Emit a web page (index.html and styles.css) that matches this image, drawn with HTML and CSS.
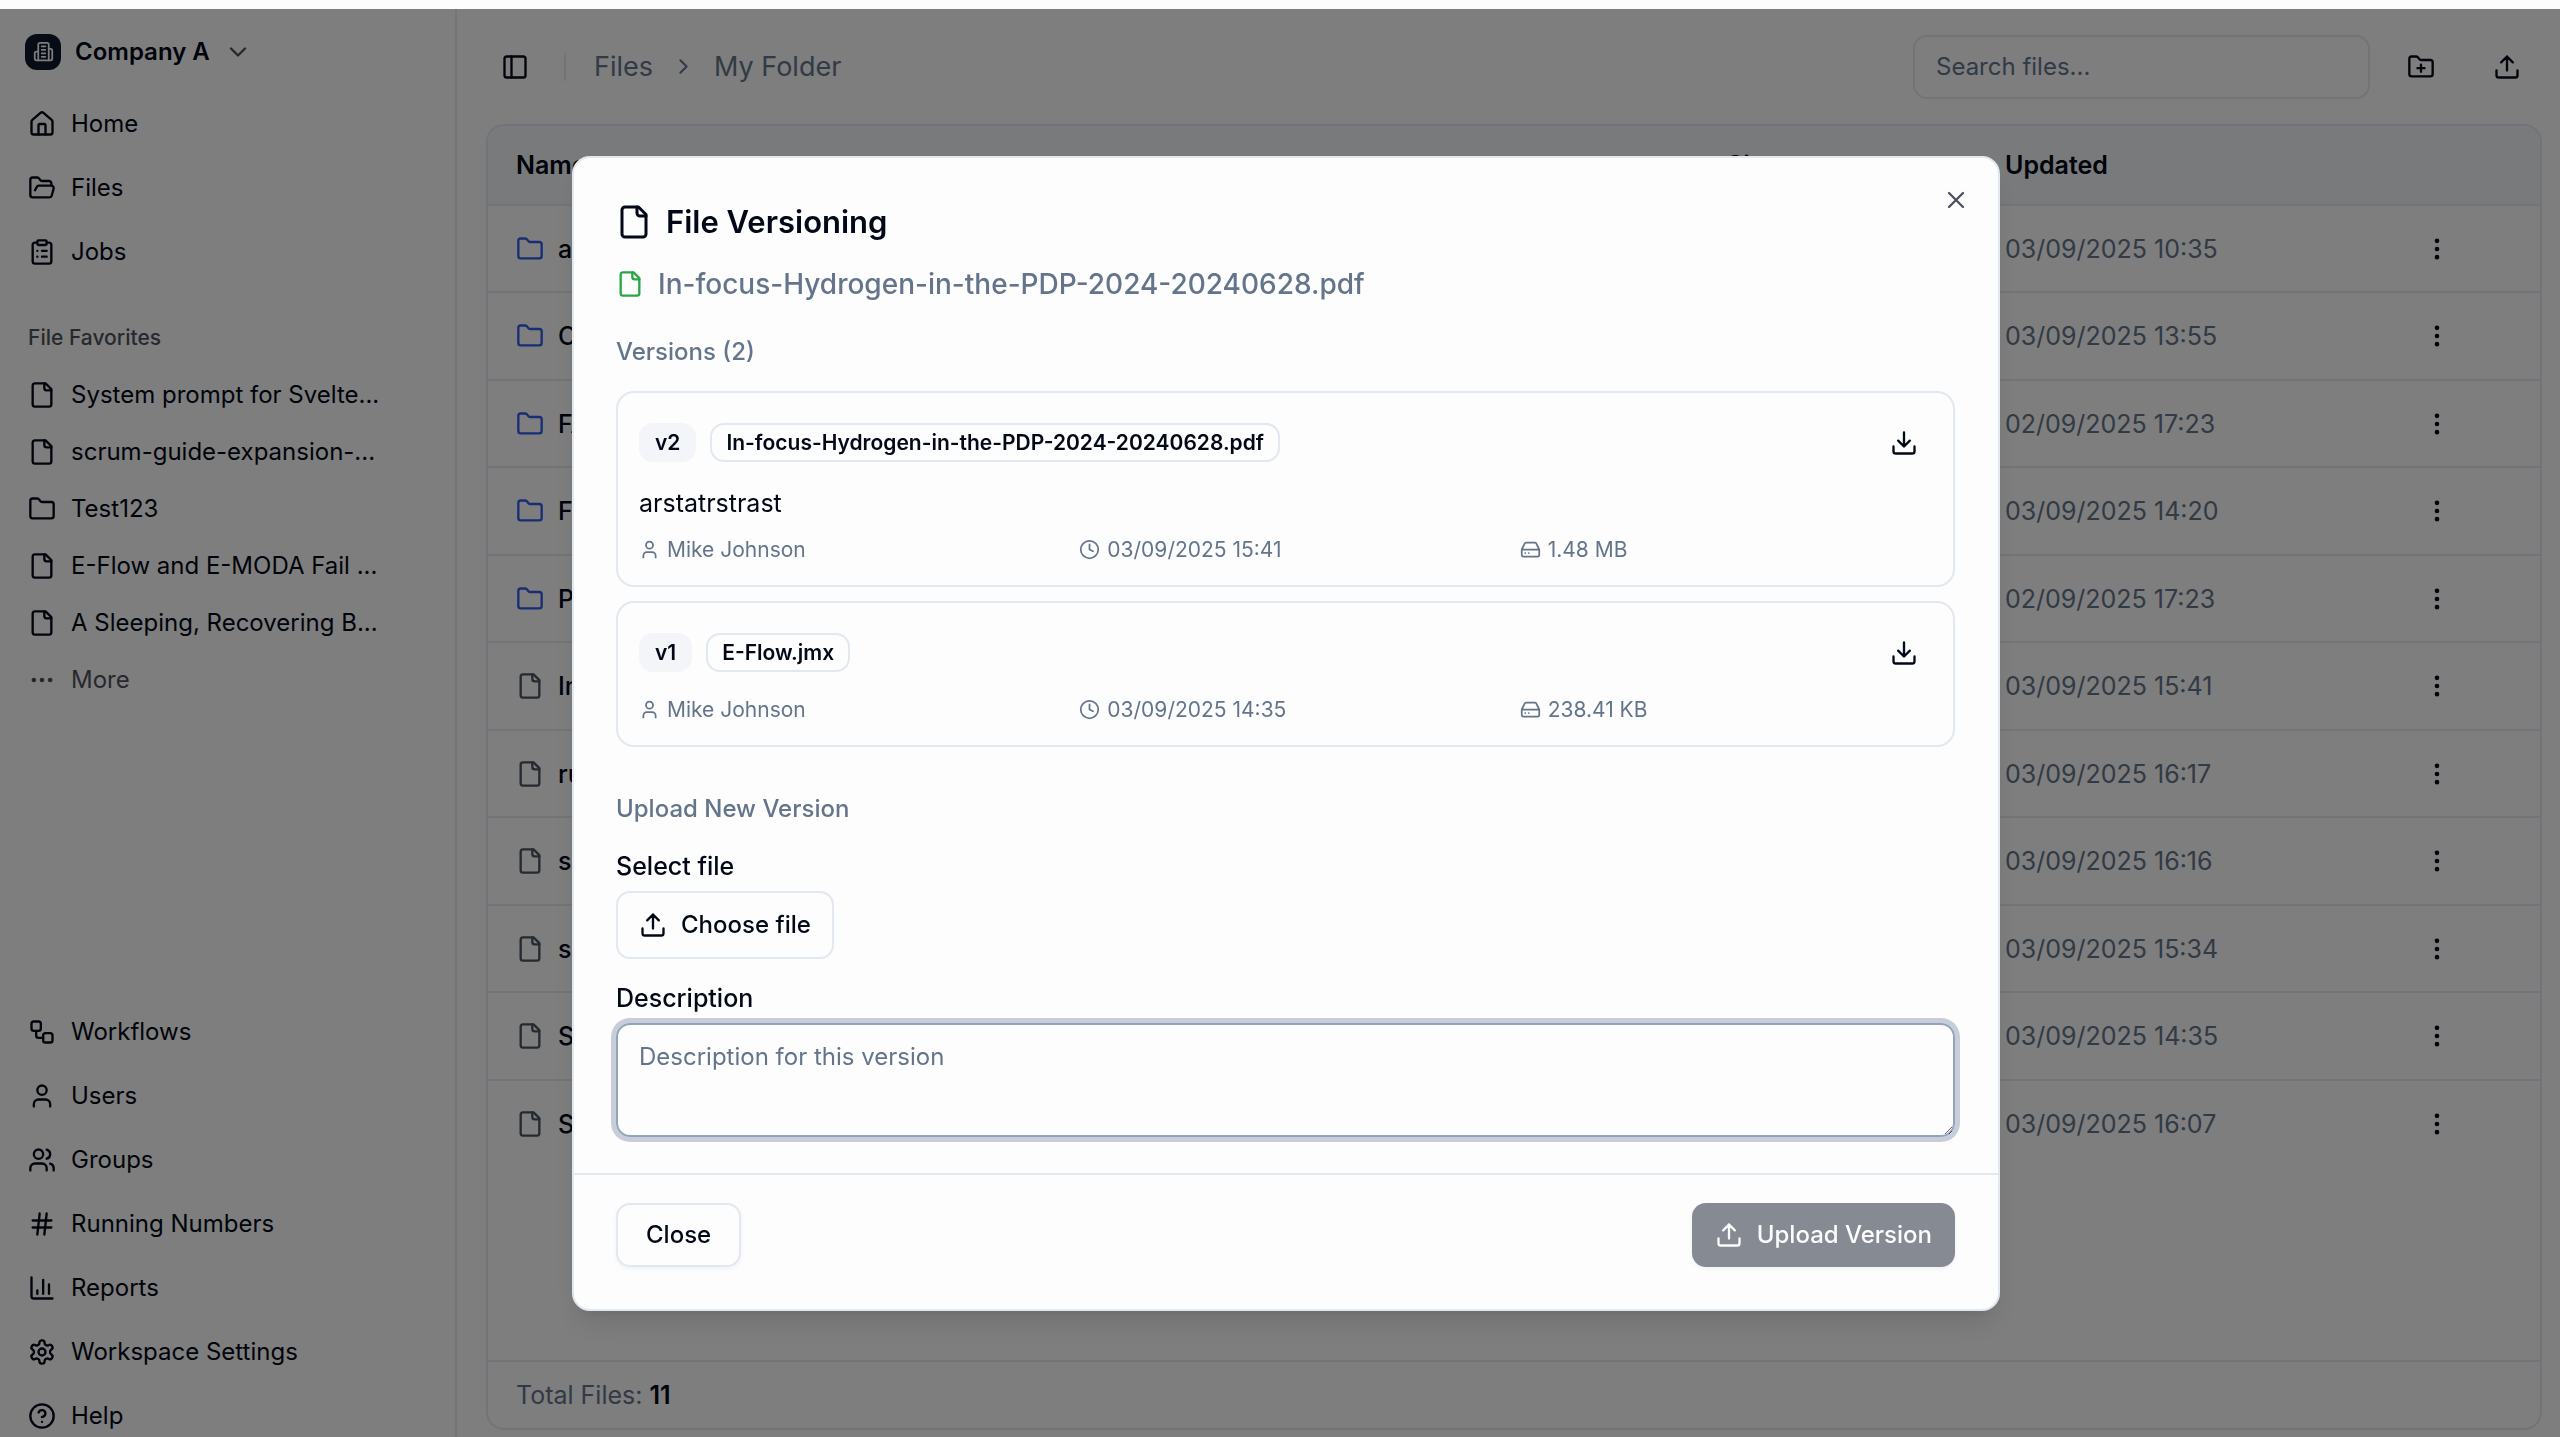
FILE: index.html
```html
<!DOCTYPE html>
<html lang="en">
<head>
  <meta charset="utf-8">
  <title>File Versioning</title>
  <link rel="stylesheet" href="styles.css">
</head>
<body>
  <!-- icon set -->
  <svg class="sprite" aria-hidden="true">
    <symbol id="building" viewBox="0 0 24 24"><path d="M6 22V4a2 2 0 0 1 2-2h8a2 2 0 0 1 2 2v18Z"/><path d="M6 12H4a2 2 0 0 0-2 2v6a2 2 0 0 0 2 2h2"/><path d="M18 9h2a2 2 0 0 1 2 2v9a2 2 0 0 1-2 2h-2"/><path d="M10 6h4M10 10h4M10 14h4M10 18h4"/></symbol>
    <symbol id="chevron-down" viewBox="0 0 24 24"><path d="m6 9 6 6 6-6"/></symbol>
    <symbol id="chevron-right" viewBox="0 0 24 24"><path d="m9 18 6-6-6-6"/></symbol>
    <symbol id="home" viewBox="0 0 24 24"><path d="M15 21v-8a1 1 0 0 0-1-1h-4a1 1 0 0 0-1 1v8"/><path d="M3 10a2 2 0 0 1 .709-1.528l7-5.999a2 2 0 0 1 2.582 0l7 5.999A2 2 0 0 1 21 10v9a2 2 0 0 1-2 2H5a2 2 0 0 1-2-2z"/></symbol>
    <symbol id="folder-open" viewBox="0 0 24 24"><path d="m6 14 1.5-2.9A2 2 0 0 1 9.24 10H20a2 2 0 0 1 1.94 2.5l-1.54 6a2 2 0 0 1-1.95 1.5H4a2 2 0 0 1-2-2V5a2 2 0 0 1 2-2h3.9a2 2 0 0 1 1.69.9l.81 1.2a2 2 0 0 0 1.67.9H18a2 2 0 0 1 2 2v2"/></symbol>
    <symbol id="clipboard" viewBox="0 0 24 24"><rect width="8" height="4" x="8" y="2" rx="1"/><path d="M16 4h2a2 2 0 0 1 2 2v14a2 2 0 0 1-2 2H6a2 2 0 0 1-2-2V6a2 2 0 0 1 2-2h2"/><path d="M12 11h4M12 16h4M8 11h.01M8 16h.01"/></symbol>
    <symbol id="file" viewBox="0 0 24 24"><path d="M15 2H6a2 2 0 0 0-2 2v16a2 2 0 0 0 2 2h12a2 2 0 0 0 2-2V7Z"/><path d="M14 2v4a2 2 0 0 0 2 2h4"/></symbol>
    <symbol id="folder" viewBox="0 0 24 24"><path d="M20 20a2 2 0 0 0 2-2V8a2 2 0 0 0-2-2h-7.9a2 2 0 0 1-1.69-.9L9.6 3.9A2 2 0 0 0 7.93 3H4a2 2 0 0 0-2 2v13a2 2 0 0 0 2 2Z"/></symbol>
    <symbol id="folder-plus" viewBox="0 0 24 24"><path d="M12 10v6M9 13h6"/><path d="M20 20a2 2 0 0 0 2-2V8a2 2 0 0 0-2-2h-7.9a2 2 0 0 1-1.69-.9L9.6 3.9A2 2 0 0 0 7.93 3H4a2 2 0 0 0-2 2v13a2 2 0 0 0 2 2Z"/></symbol>
    <symbol id="dots" viewBox="0 0 24 24"><circle cx="12" cy="12" r="1"/><circle cx="19" cy="12" r="1"/><circle cx="5" cy="12" r="1"/></symbol>
    <symbol id="dots-vertical" viewBox="0 0 24 24"><circle cx="12" cy="12" r="1"/><circle cx="12" cy="5" r="1"/><circle cx="12" cy="19" r="1"/></symbol>
    <symbol id="workflow" viewBox="0 0 24 24"><rect width="8" height="8" x="3" y="3" rx="2"/><path d="M7 11v4a2 2 0 0 0 2 2h4"/><rect width="8" height="8" x="13" y="13" rx="2"/></symbol>
    <symbol id="user" viewBox="0 0 24 24"><path d="M19 21v-2a4 4 0 0 0-4-4H9a4 4 0 0 0-4 4v2"/><circle cx="12" cy="7" r="4"/></symbol>
    <symbol id="groups" viewBox="0 0 24 24"><path d="M16 21v-2a4 4 0 0 0-4-4H6a4 4 0 0 0-4 4v2"/><circle cx="9" cy="7" r="4"/><path d="M22 21v-2a4 4 0 0 0-3-3.87M16 3.13a4 4 0 0 1 0 7.75"/></symbol>
    <symbol id="hash" viewBox="0 0 24 24"><path d="M4 9h16M4 15h16M10 3 8 21M16 3l-2 18"/></symbol>
    <symbol id="chart" viewBox="0 0 24 24"><path d="M3 3v16a2 2 0 0 0 2 2h16"/><path d="M18 17V9M13 17V5M8 17v-3"/></symbol>
    <symbol id="settings" viewBox="0 0 24 24"><path d="M12.22 2h-.44a2 2 0 0 0-2 2v.18a2 2 0 0 1-1 1.73l-.43.25a2 2 0 0 1-2 0l-.15-.08a2 2 0 0 0-2.73.73l-.22.38a2 2 0 0 0 .73 2.73l.15.1a2 2 0 0 1 1 1.72v.51a2 2 0 0 1-1 1.74l-.15.09a2 2 0 0 0-.73 2.73l.22.38a2 2 0 0 0 2.73.73l.15-.08a2 2 0 0 1 2 0l.43.25a2 2 0 0 1 1 1.73V20a2 2 0 0 0 2 2h.44a2 2 0 0 0 2-2v-.18a2 2 0 0 1 1-1.73l.43-.25a2 2 0 0 1 2 0l.15.08a2 2 0 0 0 2.73-.73l.22-.39a2 2 0 0 0-.73-2.73l-.15-.08a2 2 0 0 1-1-1.74v-.5a2 2 0 0 1 1-1.74l.15-.09a2 2 0 0 0 .73-2.73l-.22-.38a2 2 0 0 0-2.73-.73l-.15.08a2 2 0 0 1-2 0l-.43-.25a2 2 0 0 1-1-1.73V4a2 2 0 0 0-2-2z"/><circle cx="12" cy="12" r="3"/></symbol>
    <symbol id="help" viewBox="0 0 24 24"><circle cx="12" cy="12" r="10"/><path d="M9.09 9a3 3 0 0 1 5.83 1c0 2-3 3-3 3M12 17h.01"/></symbol>
    <symbol id="panel" viewBox="0 0 24 24"><rect width="18" height="18" x="3" y="3" rx="2"/><path d="M9 3v18"/></symbol>
    <symbol id="upload" viewBox="0 0 24 24"><path d="M12 3v12M17 8l-5-5-5 5M21 15v4a2 2 0 0 1-2 2H5a2 2 0 0 1-2-2v-4"/></symbol>
    <symbol id="download" viewBox="0 0 24 24"><path d="M12 15V3M7 10l5 5 5-5M21 15v4a2 2 0 0 1-2 2H5a2 2 0 0 1-2-2v-4"/></symbol>
    <symbol id="clock" viewBox="0 0 24 24"><circle cx="12" cy="12" r="10"/><path d="M12 6v6l4 2"/></symbol>
    <symbol id="drive" viewBox="0 0 24 24"><path d="M22 12H2M5.45 5.11 2 12v6a2 2 0 0 0 2 2h16a2 2 0 0 0 2-2v-6l-3.45-6.89A2 2 0 0 0 16.76 4H7.24a2 2 0 0 0-1.79 1.11zM6 16h.01M10 16h.01"/></symbol>
    <symbol id="close" viewBox="0 0 24 24"><path d="M18 6 6 18M6 6l12 12"/></symbol>
  </svg>

  <div class="app">
    <aside class="sidebar">
      <button class="company">
        <span class="company-logo"><svg class="icon small"><use href="#building"/></svg></span>
        <span>Company A</span>
        <svg class="icon faded"><use href="#chevron-down"/></svg>
      </button>
      <nav class="nav">
        <a href="#"><svg class="icon"><use href="#home"/></svg>Home</a>
        <a href="#"><svg class="icon"><use href="#folder-open"/></svg>Files</a>
        <a href="#"><svg class="icon"><use href="#clipboard"/></svg>Jobs</a>
      </nav>
      <h2 class="nav-title">File Favorites</h2>
      <nav class="nav favorites">
        <a href="#"><svg class="icon"><use href="#file"/></svg>System prompt for Svelte...</a>
        <a href="#"><svg class="icon"><use href="#file"/></svg>scrum-guide-expansion-...</a>
        <a href="#"><svg class="icon"><use href="#folder"/></svg>Test123</a>
        <a href="#"><svg class="icon"><use href="#file"/></svg>E-Flow and E-MODA Fail ...</a>
        <a href="#"><svg class="icon"><use href="#file"/></svg>A Sleeping, Recovering B...</a>
        <a href="#" class="faded"><svg class="icon"><use href="#dots"/></svg>More</a>
      </nav>
      <nav class="nav bottom">
        <a href="#"><svg class="icon"><use href="#workflow"/></svg>Workflows</a>
        <a href="#"><svg class="icon"><use href="#user"/></svg>Users</a>
        <a href="#"><svg class="icon"><use href="#groups"/></svg>Groups</a>
        <a href="#"><svg class="icon"><use href="#hash"/></svg>Running Numbers</a>
        <a href="#"><svg class="icon"><use href="#chart"/></svg>Reports</a>
        <a href="#"><svg class="icon"><use href="#settings"/></svg>Workspace Settings</a>
        <a href="#"><svg class="icon"><use href="#help"/></svg>Help</a>
      </nav>
    </aside>

    <main class="main">
      <header class="topbar">
        <button class="icon-button toggle" aria-label="Toggle sidebar"><svg class="icon"><use href="#panel"/></svg></button>
        <nav class="breadcrumb">
          <a href="#">Files</a>
          <svg class="icon medium"><use href="#chevron-right"/></svg>
          <a href="#">My Folder</a>
        </nav>
        <input class="search" type="text" placeholder="Search files..." aria-label="Search files">
        <button class="icon-button" aria-label="New folder"><svg class="icon"><use href="#folder-plus"/></svg></button>
        <button class="icon-button" aria-label="Upload"><svg class="icon"><use href="#upload"/></svg></button>
      </header>

      <section class="files">
        <table class="file-table">
          <colgroup>
            <col>
            <col class="col-size">
            <col class="col-updated">
            <col class="col-actions">
          </colgroup>
          <thead>
            <tr><th>Name</th><th>Size</th><th>Updated</th><th></th></tr>
          </thead>
          <tbody>
            <tr><td><a href="#" class="folder"><svg class="icon"><use href="#folder"/></svg>api</a></td><td></td><td>03/09/2025 10:35</td><td><button class="icon-button" aria-label="Actions"><svg class="icon"><use href="#dots-vertical"/></svg></button></td></tr>
            <tr><td><a href="#" class="folder"><svg class="icon"><use href="#folder"/></svg>CAD</a></td><td></td><td>03/09/2025 13:55</td><td><button class="icon-button" aria-label="Actions"><svg class="icon"><use href="#dots-vertical"/></svg></button></td></tr>
            <tr><td><a href="#" class="folder"><svg class="icon"><use href="#folder"/></svg>FAQ</a></td><td></td><td>02/09/2025 17:23</td><td><button class="icon-button" aria-label="Actions"><svg class="icon"><use href="#dots-vertical"/></svg></button></td></tr>
            <tr><td><a href="#" class="folder"><svg class="icon"><use href="#folder"/></svg>Fit</a></td><td></td><td>03/09/2025 14:20</td><td><button class="icon-button" aria-label="Actions"><svg class="icon"><use href="#dots-vertical"/></svg></button></td></tr>
            <tr><td><a href="#" class="folder"><svg class="icon"><use href="#folder"/></svg>PDP</a></td><td></td><td>02/09/2025 17:23</td><td><button class="icon-button" aria-label="Actions"><svg class="icon"><use href="#dots-vertical"/></svg></button></td></tr>
            <tr><td><a href="#"><svg class="icon"><use href="#file"/></svg>Info</a></td><td></td><td>03/09/2025 15:41</td><td><button class="icon-button" aria-label="Actions"><svg class="icon"><use href="#dots-vertical"/></svg></button></td></tr>
            <tr><td><a href="#"><svg class="icon"><use href="#file"/></svg>run</a></td><td></td><td>03/09/2025 16:17</td><td><button class="icon-button" aria-label="Actions"><svg class="icon"><use href="#dots-vertical"/></svg></button></td></tr>
            <tr><td><a href="#"><svg class="icon"><use href="#file"/></svg>sql</a></td><td></td><td>03/09/2025 16:16</td><td><button class="icon-button" aria-label="Actions"><svg class="icon"><use href="#dots-vertical"/></svg></button></td></tr>
            <tr><td><a href="#"><svg class="icon"><use href="#file"/></svg>src</a></td><td></td><td>03/09/2025 15:34</td><td><button class="icon-button" aria-label="Actions"><svg class="icon"><use href="#dots-vertical"/></svg></button></td></tr>
            <tr><td><a href="#"><svg class="icon"><use href="#file"/></svg>SLA</a></td><td></td><td>03/09/2025 14:35</td><td><button class="icon-button" aria-label="Actions"><svg class="icon"><use href="#dots-vertical"/></svg></button></td></tr>
            <tr><td><a href="#"><svg class="icon"><use href="#file"/></svg>SOP</a></td><td></td><td>03/09/2025 16:07</td><td><button class="icon-button" aria-label="Actions"><svg class="icon"><use href="#dots-vertical"/></svg></button></td></tr>
          </tbody>
        </table>
        <footer class="files-footer">Total Files: <strong>11</strong></footer>
      </section>
    </main>
  </div>

  <div class="overlay">
    <div class="modal" role="dialog" aria-labelledby="modal-title">
      <button class="modal-close" aria-label="Close dialog"><svg class="icon"><use href="#close"/></svg></button>
      <div class="modal-body">
        <h1 class="modal-title" id="modal-title"><svg class="icon large"><use href="#file"/></svg>File Versioning</h1>
        <p class="file-name"><svg class="icon"><use href="#file"/></svg>In-focus-Hydrogen-in-the-PDP-2024-20240628.pdf</p>

        <h3 class="section-title">Versions (2)</h3>
        <div class="versions">
          <article class="version">
            <div class="version-head">
              <span class="badge filled">v2</span>
              <span class="badge">In-focus-Hydrogen-in-the-PDP-2024-20240628.pdf</span>
              <button class="download" aria-label="Download v2"><svg class="icon"><use href="#download"/></svg></button>
            </div>
            <p class="version-text">arstatrstrast</p>
            <div class="meta">
              <span><svg class="icon small"><use href="#user"/></svg>Mike Johnson</span>
              <span><svg class="icon small"><use href="#clock"/></svg>03/09/2025 15:41</span>
              <span><svg class="icon small"><use href="#drive"/></svg>1.48 MB</span>
            </div>
          </article>
          <article class="version">
            <div class="version-head">
              <span class="badge filled">v1</span>
              <span class="badge">E-Flow.jmx</span>
              <button class="download" aria-label="Download v1"><svg class="icon"><use href="#download"/></svg></button>
            </div>
            <div class="meta">
              <span><svg class="icon small"><use href="#user"/></svg>Mike Johnson</span>
              <span><svg class="icon small"><use href="#clock"/></svg>03/09/2025 14:35</span>
              <span><svg class="icon small"><use href="#drive"/></svg>238.41 KB</span>
            </div>
          </article>
        </div>

        <h3 class="section-title">Upload New Version</h3>
        <div class="field">
          <label for="choose">Select file</label>
          <button class="button choose" id="choose"><svg class="icon"><use href="#upload"/></svg>Choose file</button>
        </div>
        <div class="field">
          <label for="description">Description</label>
          <textarea id="description" placeholder="Description for this version"></textarea>
        </div>
      </div>
      <footer class="modal-footer">
        <button class="button">Close</button>
        <button class="button primary" disabled><svg class="icon"><use href="#upload"/></svg>Upload Version</button>
      </footer>
    </div>
  </div>
</body>
</html>
```
FILE: styles.css
```css
* {
  box-sizing: border-box;
}

body {
  margin: 0;
  height: 100vh;
  display: flex;
  flex-direction: column;
  overflow: hidden;
  border-top: 9px solid #fdfdfd;
  background-color: #fcfcfc;
  color: #020817;
  font-family: Inter, "Liberation Sans", sans-serif;
  font-size: 25px;
  line-height: 36px;
}

h1, h2, h3, p {
  margin: 0;
}

a {
  color: inherit;
  text-decoration: none;
}

button, input, textarea {
  font: inherit;
  color: inherit;
}

button {
  background: none;
  border: none;
  padding: 0;
}

.sprite {
  display: none;
}

.icon {
  width: 28px;
  height: 28px;
  flex: none;
  fill: none;
  stroke: currentColor;
  stroke-width: 2;
  stroke-linecap: round;
  stroke-linejoin: round;
}

.icon.small {
  width: 21px;
  height: 21px;
}

.icon.medium {
  width: 25px;
  height: 25px;
}

.icon.large {
  width: 36px;
  height: 36px;
}

.faded {
  opacity: 0.7;
}

.app {
  flex: 1;
  display: flex;
  min-height: 0;
}

/* Sidebar */
.sidebar {
  width: 457px;
  flex: none;
  display: flex;
  flex-direction: column;
  padding: 14px 14px 0;
  border-right: 2px solid #e2e8f0;
  font-size: 24px;
}

.company {
  display: flex;
  align-items: center;
  gap: 14px;
  height: 57px;
  padding-left: 11px;
  font-weight: 600;
}

.company-logo {
  display: flex;
  align-items: center;
  justify-content: center;
  width: 36px;
  height: 36px;
  border-radius: 12px;
  background-color: #0f172a;
  color: #f8fafc;
}

.nav {
  display: flex;
  flex-direction: column;
  gap: 7px;
  padding-top: 15px;
}

.nav a {
  display: flex;
  align-items: center;
  gap: 15px;
  height: 57px;
  padding-left: 14px;
  white-space: nowrap;
}

.nav-title {
  height: 57px;
  margin-top: 29px;
  padding-left: 14px;
  font-size: 21px;
  font-weight: 500;
  line-height: 57px;
  opacity: 0.7;
}

.nav.favorites {
  gap: 0;
  padding-top: 0;
}

.nav.bottom {
  margin-top: auto;
  margin-bottom: -7px;
}

/* Main area */
.main {
  flex: 1;
  display: flex;
  flex-direction: column;
  min-width: 0;
  padding: 0 18px 7px 29px;
}

.topbar {
  display: flex;
  align-items: center;
  gap: 15px;
  height: 115px;
}

.icon-button {
  display: flex;
  align-items: center;
  justify-content: center;
  width: 71px;
  height: 57px;
}

.icon-button.toggle {
  width: 57px;
}

.breadcrumb {
  display: flex;
  align-items: center;
  gap: 18px;
  margin-left: 6px;
  padding-left: 28px;
  border-left: 2px solid #e2e8f0;
  font-size: 27px;
  line-height: 28px;
  color: #64748b;
}

.search {
  width: 457px;
  height: 64px;
  margin-left: auto;
  padding: 0 21px;
  border: 2px solid #e2e8f0;
  border-radius: 14px;
  background: none;
  font-size: 24px;
}

::placeholder {
  color: #64748b;
  opacity: 1;
}

.files {
  flex: 1;
  display: flex;
  flex-direction: column;
  border: 2px solid #e2e8f0;
  border-radius: 18px;
  overflow: hidden;
}

.file-table {
  width: 100%;
  table-layout: fixed;
  border-collapse: collapse;
}

.col-size {
  width: 278px;
}

.col-updated {
  width: 379px;
}

.col-actions {
  width: 184px;
}

.file-table th {
  height: 79px;
  padding: 0 28px;
  background-color: #f1f5f9;
  font-weight: 600;
  text-align: left;
}

.file-table td {
  height: 87px;
  padding: 0 28px;
  border-top: 2px solid #e2e8f0;
  color: #64748b;
  white-space: nowrap;
}

.file-table tr:nth-child(even) td {
  height: 88px;
}

.file-table td:nth-child(4) {
  padding: 0 45px;
}

.file-table td a {
  display: flex;
  align-items: center;
  gap: 14px;
  color: #020817;
  font-weight: 500;
}

.file-table td .icon {
  color: #4b5563;
}

.file-table td .folder .icon {
  color: #2f5be8;
}

.file-table td .icon-button .icon {
  color: #020817;
}

.files-footer {
  margin-top: auto;
  padding: 15px 28px;
  border-top: 2px solid #e2e8f0;
  color: #64748b;
}

.files-footer strong {
  color: #020817;
  font-weight: 600;
}

/* Modal */
.overlay {
  position: fixed;
  inset: 9px 0 0;
  display: flex;
  align-items: flex-start;
  justify-content: center;
  padding: 147px 0 0 12px;
  background-color: rgba(0, 0, 0, 0.5);
}

.modal {
  position: relative;
  width: 90%;
  max-width: 1428px;
  background-color: #fdfdfd;
  border: 2px solid #e2e8f0;
  border-radius: 18px;
  box-shadow: 0 18px 27px -5px rgba(0, 0, 0, 0.1), 0 7px 11px -7px rgba(0, 0, 0, 0.1);
}

.modal-close {
  position: absolute;
  top: 28px;
  right: 28px;
  display: flex;
  opacity: 0.7;
}

.modal-body {
  display: flex;
  flex-direction: column;
  padding: 42px 43px 36px 42px;
}

.modal-title {
  display: flex;
  align-items: center;
  gap: 14px;
  height: 44px;
  font-size: 31px;
  font-weight: 600;
}

.file-name {
  display: flex;
  align-items: center;
  gap: 14px;
  margin-top: 20px;
  height: 40px;
  font-size: 28px;
  font-weight: 500;
  color: #64748b;
}

.file-name .icon {
  color: #28a745;
}

.section-title {
  margin-top: 30px;
  font-size: 24px;
  font-weight: 500;
  color: #64748b;
}

.versions {
  display: flex;
  flex-direction: column;
  gap: 14px;
  margin: 21px 0 14px;
}

.version {
  display: flex;
  flex-direction: column;
  gap: 14px;
  padding: 21px;
  border: 2px solid #e2e8f0;
  border-radius: 18px;
}

.version-head {
  display: flex;
  align-items: center;
  gap: 14px;
}

.badge {
  height: 39px;
  padding: 0 14px;
  border: 2px solid #e2e8f0;
  border-radius: 14px;
  font-size: 21px;
  font-weight: 600;
  line-height: 35px;
}

.badge.filled {
  border-color: #f4f5f9;
  background-color: #f4f5f9;
}

.download {
  display: flex;
  align-items: center;
  justify-content: center;
  width: 57px;
  height: 57px;
  margin-left: auto;
}

.meta {
  display: grid;
  grid-template-columns: repeat(3, 1fr);
  gap: 28px;
  font-size: 21px;
  line-height: 29px;
  color: #64748b;
}

.meta span {
  display: flex;
  align-items: center;
  gap: 7px;
}

.field {
  display: flex;
  flex-direction: column;
  align-items: flex-start;
  gap: 7px;
  margin-top: 21px;
}

.field label {
  font-weight: 500;
}

.field textarea {
  display: block;
  width: 100%;
  height: 114px;
  padding: 14px 21px;
  border: 2px solid #94a3b8;
  border-radius: 14px;
  outline: none;
  background: none;
  font-size: 24px;
  box-shadow: 0 0 0 5px #c7ced9;
}

.button {
  display: flex;
  align-items: center;
  gap: 14px;
  height: 64px;
  padding: 0 28px;
  border: 2px solid #e2e8f0;
  border-radius: 14px;
  font-size: 24px;
  font-weight: 500;
  box-shadow: 0 2px 4px rgba(0, 0, 0, 0.05);
}

.button.choose {
  height: 68px;
  padding: 0 21px;
  box-shadow: none;
}

.button.primary {
  padding: 0 21px;
  border-color: #868a93;
  background-color: #868a93;
  color: #fcfcfd;
}

.modal-footer {
  display: flex;
  justify-content: space-between;
  padding: 28px 43px 42px 42px;
  border-top: 2px solid #e2e8f0;
}
```
